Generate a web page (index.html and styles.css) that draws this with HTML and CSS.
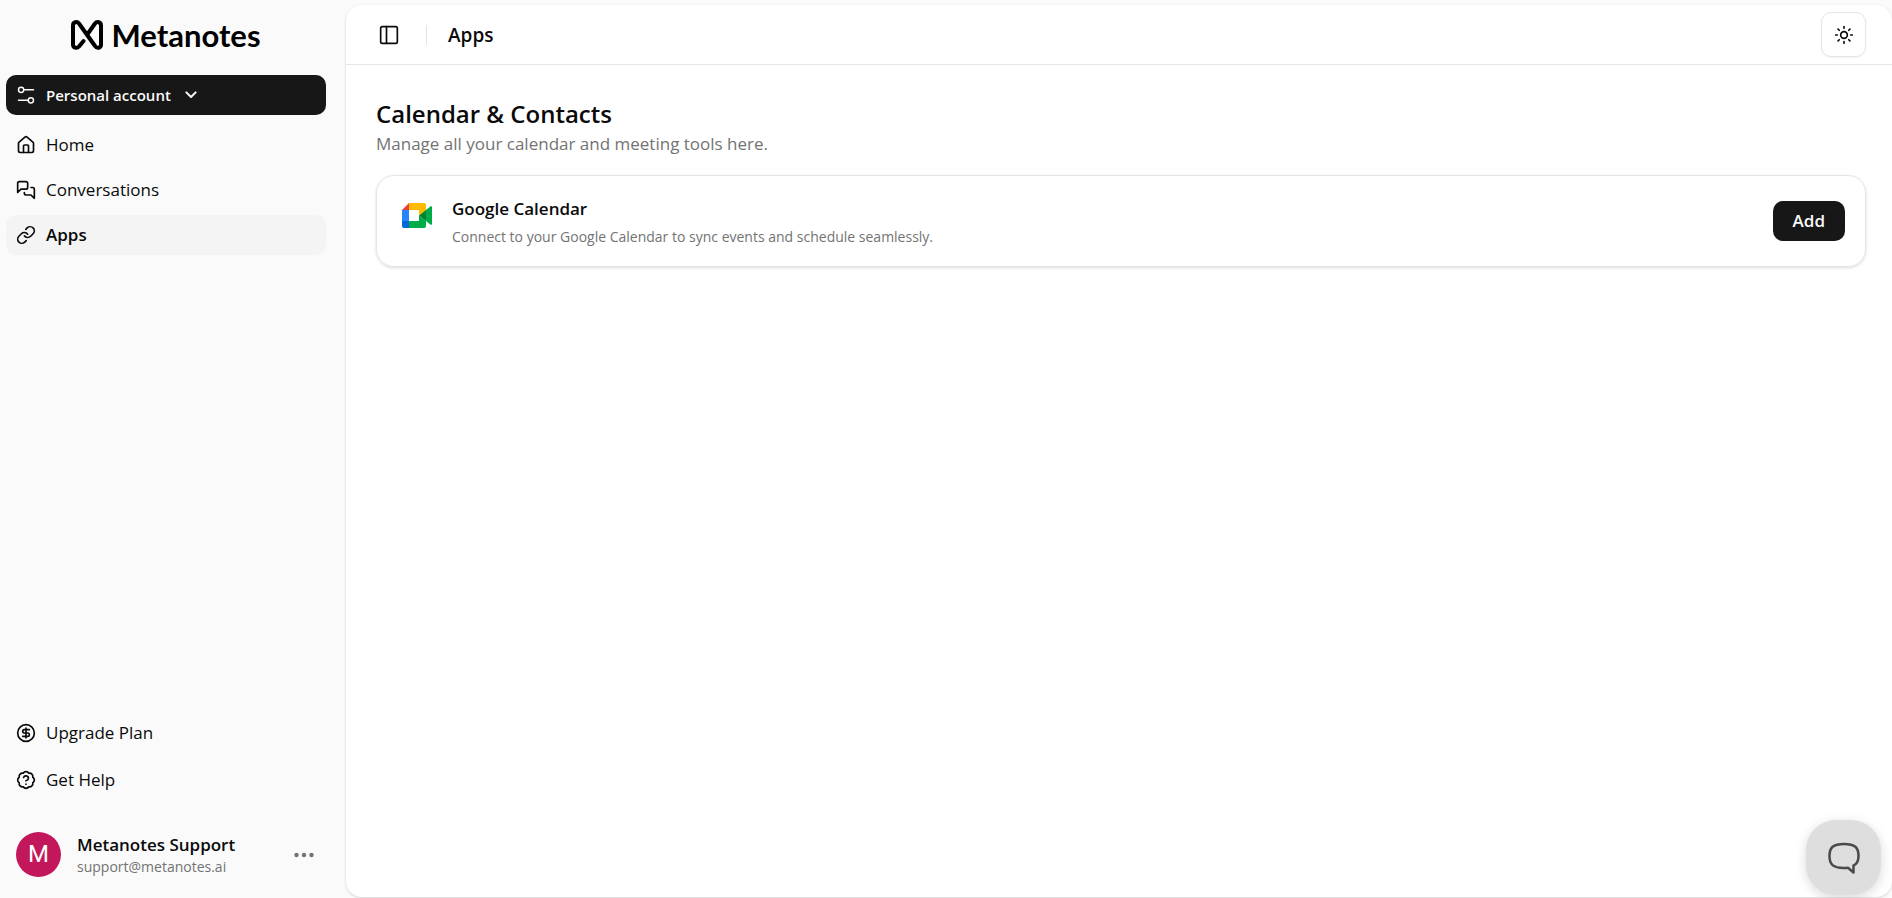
FILE: index.html
```html
<!DOCTYPE html>
<html lang="en">

<head>
    <meta charset="UTF-8">
    <meta name="viewport" content="width=device-width, initial-scale=1">
    <title>Apps</title>
    <link rel="stylesheet" href="styles.css">
</head>

<body>
    <aside class="sidebar">
        <a class="logo" href="#">
            <svg class="logo-mark" viewBox="0 0 32 30" fill="none" stroke="currentColor" stroke-width="4" stroke-linecap="round" stroke-linejoin="round">
                <path d="M12.5 21L8 26.5C6 28.8 2 28 2 24.5V5.5C2 2 6 1 8 3.500L24 26C26 29 30 28 30 24.5V5.5C30 2 26 1 24 3.5L17 13.5" />
            </svg>
            <span>Metanotes</span>
        </a>

        <button class="account" type="button">
            <svg class="icon account-icon" viewBox="0 0 24 24">
                <path d="M9 5h13M2 19h13" />
                <circle cx="5.500" cy="5" r="3.500" />
                <circle cx="18.500" cy="19" r="3.500" />
            </svg>
            Personal account
            <svg class="icon chevron" viewBox="0 0 24 24"><path d="m5 8 7 7 7-7" /></svg>
        </button>

        <nav class="menu">
            <a class="menu-item" href="#">
                <svg class="icon" viewBox="0 0 24 24">
                    <path d="M15 21v-8a1 1 0 0 0-1-1h-4a1 1 0 0 0-1 1v8" />
                    <path d="M3 10a2 2 0 0 1 .709-1.528l7-6a2 2 0 0 1 2.582 0l7 6A2 2 0 0 1 21 10v9a2 2 0 0 1-2 2H5a2 2 0 0 1-2-2z" />
                </svg>
                Home
            </a>
            <a class="menu-item" href="#">
                <svg class="icon" viewBox="0 0 24 24">
                    <path d="M14 9a2 2 0 0 1-2 2H6l-4 4V4a2 2 0 0 1 2-2h8a2 2 0 0 1 2 2z" />
                    <path d="M18 9h2a2 2 0 0 1 2 2v11l-4-4h-6a2 2 0 0 1-2-2v-1" />
                </svg>
                Conversations
            </a>
            <a class="menu-item active" href="#" aria-current="page">
                <svg class="icon" viewBox="0 0 24 24">
                    <path d="M10 13a5 5 0 0 0 7.54.54l3-3a5 5 0 0 0-7.07-7.07l-1.72 1.71" />
                    <path d="M14 11a5 5 0 0 0-7.54-.54l-3 3a5 5 0 0 0 7.07 7.07l1.71-1.71" />
                </svg>
                Apps
            </a>
        </nav>

        <nav class="menu menu-bottom">
            <a class="menu-item" href="#">
                <svg class="icon" viewBox="0 0 24 24">
                    <circle cx="12" cy="12" r="10" />
                    <path d="M16 8h-6a2 2 0 1 0 0 4h4a2 2 0 1 1 0 4H8M12 18V6" />
                </svg>
                Upgrade Plan
            </a>
            <a class="menu-item" href="#">
                <svg class="icon" viewBox="0 0 24 24">
                    <path d="M3.85 8.62a4 4 0 0 1 4.78-4.77 4 4 0 0 1 6.74 0 4 4 0 0 1 4.78 4.78 4 4 0 0 1 0 6.74 4 4 0 0 1-4.77 4.78 4 4 0 0 1-6.75 0 4 4 0 0 1-4.78-4.77 4 4 0 0 1 0-6.76Z" />
                    <path d="M9.09 9a3 3 0 0 1 5.83 1c0 2-3 3-3 3M12 17h.01" />
                </svg>
                Get Help
            </a>
        </nav>

        <button class="user" type="button">
            <span class="avatar">M</span>
            <span class="user-info">
                <span class="user-name">Metanotes Support</span>
                <span class="user-email">support@metanotes.ai</span>
            </span>
            <svg class="dots" viewBox="0 0 20 6">
                <circle cx="2.5" cy="3" r="2.2" />
                <circle cx="10" cy="3" r="2.2" />
                <circle cx="17.5" cy="3" r="2.2" />
            </svg>
        </button>
    </aside>

    <main class="panel">
        <header class="topbar">
            <button class="toggle" type="button" aria-label="Toggle sidebar">
                <svg class="icon" viewBox="0 0 24 24">
                    <rect x="2" y="2" width="20" height="20" rx="2" />
                    <path d="M9 2v20" />
                </svg>
            </button>
            <span class="divider"></span>
            <h1>Apps</h1>
            <button class="theme" type="button" aria-label="Toggle theme">
                <svg class="icon" viewBox="0 0 24 24">
                    <circle cx="12" cy="12" r="4" />
                    <path d="M12 2v2M12 20v2M4.9 4.9l1.4 1.4M17.700 17.700l1.400 1.400M2 12h2M20 12h2M6.300 17.700l-1.400 1.400M19.100 4.900l-1.400 1.400" />
                </svg>
            </button>
        </header>

        <section class="content">
            <h2>Calendar &amp; Contacts</h2>
            <p class="intro">Manage all your calendar and meeting tools here.</p>

            <article class="card">
                <svg class="app-icon" viewBox="0 0 30 25">
                    <path fill="#ea4335" d="M7 0v7H0z" />
                    <path fill="#2684fc" d="M0 7h7v11H0z" />
                    <path fill="#0066da" d="M0 18h7v7H2a2 2 0 0 1-2-2z" />
                    <path fill="#ffba00" d="M7 0h15a2 2 0 0 1 2 2v5l-7 5.5V7H7z" />
                    <path fill="#00ac47" d="M7 18h10v-5.5l7 5.5v5a2 2 0 0 1-2 2H7z" />
                    <path fill="#00ac47" d="M24 7l4.600-3.700A.9.9 0 0 1 30 4v17a.9.9 0 0 1-1.400.7L24 18z" />
                    <path fill="#00832d" d="M17 12.500L24 7v11z" />
                </svg>
                <div class="card-text">
                    <h3>Google Calendar</h3>
                    <p>Connect to your Google Calendar to sync events and schedule seamlessly.</p>
                </div>
                <button class="add" type="button">Add</button>
            </article>
        </section>
    </main>

    <button class="chat" type="button" aria-label="Open chat">
        <svg viewBox="0 0 32 32" fill="none" stroke="currentColor" stroke-width="2.5" stroke-linejoin="round">
            <path d="M16 2C5 2 1.500 5.500 1.500 14s3.500 12 14 12c1.800 0 3.200 0 4.500-.2L25.500 30.500V23.500C29 22 30.500 19 30.500 14 30.500 5.500 27 2 16 2z" />
        </svg>
    </button>
</body>

</html>
```
FILE: styles.css
```css
* {
    box-sizing: border-box;
}

body {
    display: flex;
    min-height: 100vh;
    margin: 0;
    background-color: #fafafa;
    color: #0a0a0a;
    font-family: "Open Sans", "Noto Sans", sans-serif;
    font-size: 17px;
    line-height: 24px;
}

h1, h2, h3, p {
    margin: 0;
}

a {
    color: inherit;
    text-decoration: none;
}

button {
    font: inherit;
    color: inherit;
    background: none;
    border: none;
    padding: 0;
    cursor: pointer;
}

.icon {
    flex: none;
    width: 20px;
    height: 20px;
    fill: none;
    stroke: currentColor;
    stroke-width: 2;
    stroke-linecap: round;
    stroke-linejoin: round;
}

/* sidebar */
.sidebar {
    display: flex;
    flex-direction: column;
    flex: none;
    width: 346px;
    padding: 15px 20px 16px 6px;
}

.logo {
    display: flex;
    align-items: center;
    justify-content: center;
    gap: 8px;
    height: 40px;
    color: #000;
    font-family: Lato, sans-serif;
    font-size: 31px;
    font-weight: 700;
    line-height: 40px;
}

.logo-mark {
    width: 32px;
    height: 30px;
}

.account {
    display: flex;
    align-items: center;
    height: 40px;
    margin-top: 20px;
    padding: 0 11px;
    border-radius: 10px;
    background-color: #171717;
    color: #fafafa;
    font-size: 15px;
    font-weight: 600;
}

.account-icon {
    width: 18px;
    height: 18px;
    margin-right: 11px;
}

.chevron {
    width: 16px;
    height: 16px;
    margin-left: 12px;
    stroke-width: 3;
}

.menu {
    display: flex;
    flex-direction: column;
    gap: 5px;
    margin-top: 10px;
}

.menu-item {
    display: flex;
    align-items: center;
    gap: 10px;
    height: 40px;
    padding: 0 10px;
    border-radius: 10px;
}

.menu-item.active {
    background-color: #f4f4f5;
    font-weight: 600;
}

.menu-bottom {
    gap: 7px;
    margin-top: auto;
}

.user {
    display: flex;
    align-items: center;
    gap: 16px;
    margin-top: 27px;
    padding: 5px 12px 5px 10px;
    text-align: left;
}

.avatar {
    width: 45px;
    height: 45px;
    border-radius: 50%;
    background-color: #c2185b;
    color: #fff;
    font-family: Roboto, sans-serif;
    font-size: 24px;
    line-height: 45px;
    text-align: center;
}

.user-info {
    flex: 1;
    display: flex;
    flex-direction: column;
}

.user-name {
    font-weight: 600;
}

.user-email {
    color: #737373;
    font-size: 14px;
    line-height: 20px;
}

.dots {
    width: 20px;
    height: 6px;
    fill: #737373;
}

/* main panel */
.panel {
    flex: 1;
    margin: 5px 0 1px;
    border-radius: 16px;
    background-color: #fff;
    box-shadow: 0 1px 3px rgba(0, 0, 0, 0.15);
}

.topbar {
    display: flex;
    align-items: center;
    height: 60px;
    padding: 0 26px 0 33px;
    border-bottom: 1px solid #e5e5e5;
}

.toggle {
    display: flex;
}

.divider {
    width: 1px;
    height: 20px;
    margin: 0 21px 0 27px;
    background-color: #e5e5e5;
}

h1 {
    flex: 1;
    font-size: 19px;
    font-weight: 600;
}

.theme {
    display: flex;
    align-items: center;
    justify-content: center;
    width: 45px;
    height: 45px;
    border: 1px solid #e5e5e5;
    border-radius: 10px;
    box-shadow: 0 1px 2px rgba(0, 0, 0, 0.05);
}

.content {
    padding: 33px 26px 32px 30px;
}

h2 {
    font-size: 24px;
    font-weight: 600;
    line-height: 32px;
}

.intro {
    color: #737373;
    line-height: 28px;
}

.card {
    display: flex;
    align-items: center;
    gap: 20px;
    margin-top: 17px;
    padding: 15px 20px;
    border: 1px solid #e5e5e5;
    border-radius: 18px;
    box-shadow: 0 1px 3px rgba(0, 0, 0, 0.15);
}

.app-icon {
    align-self: flex-start;
    width: 30px;
    height: 25px;
    margin: 12px 0 0 5px;
}

.card-text {
    flex: 1;
    padding-top: 4px;
    line-height: 28px;
}

h3 {
    font-size: 17px;
    font-weight: 600;
}

.card-text p {
    color: #737373;
    font-size: 14px;
}

.add {
    height: 40px;
    padding: 0 20px;
    border-radius: 10px;
    background-color: #171717;
    color: #fafafa;
    font-weight: 600;
}

/* floating chat launcher */
.chat {
    position: fixed;
    right: 11px;
    bottom: 3px;
    display: flex;
    align-items: center;
    justify-content: center;
    width: 75px;
    height: 75px;
    border-radius: 30px;
    background-color: #dedede;
    color: #4a4a4a;
    box-shadow: 0 3px 12px rgba(0, 0, 0, 0.15);
}

.chat svg {
    width: 32px;
    height: 32px;
}
```
